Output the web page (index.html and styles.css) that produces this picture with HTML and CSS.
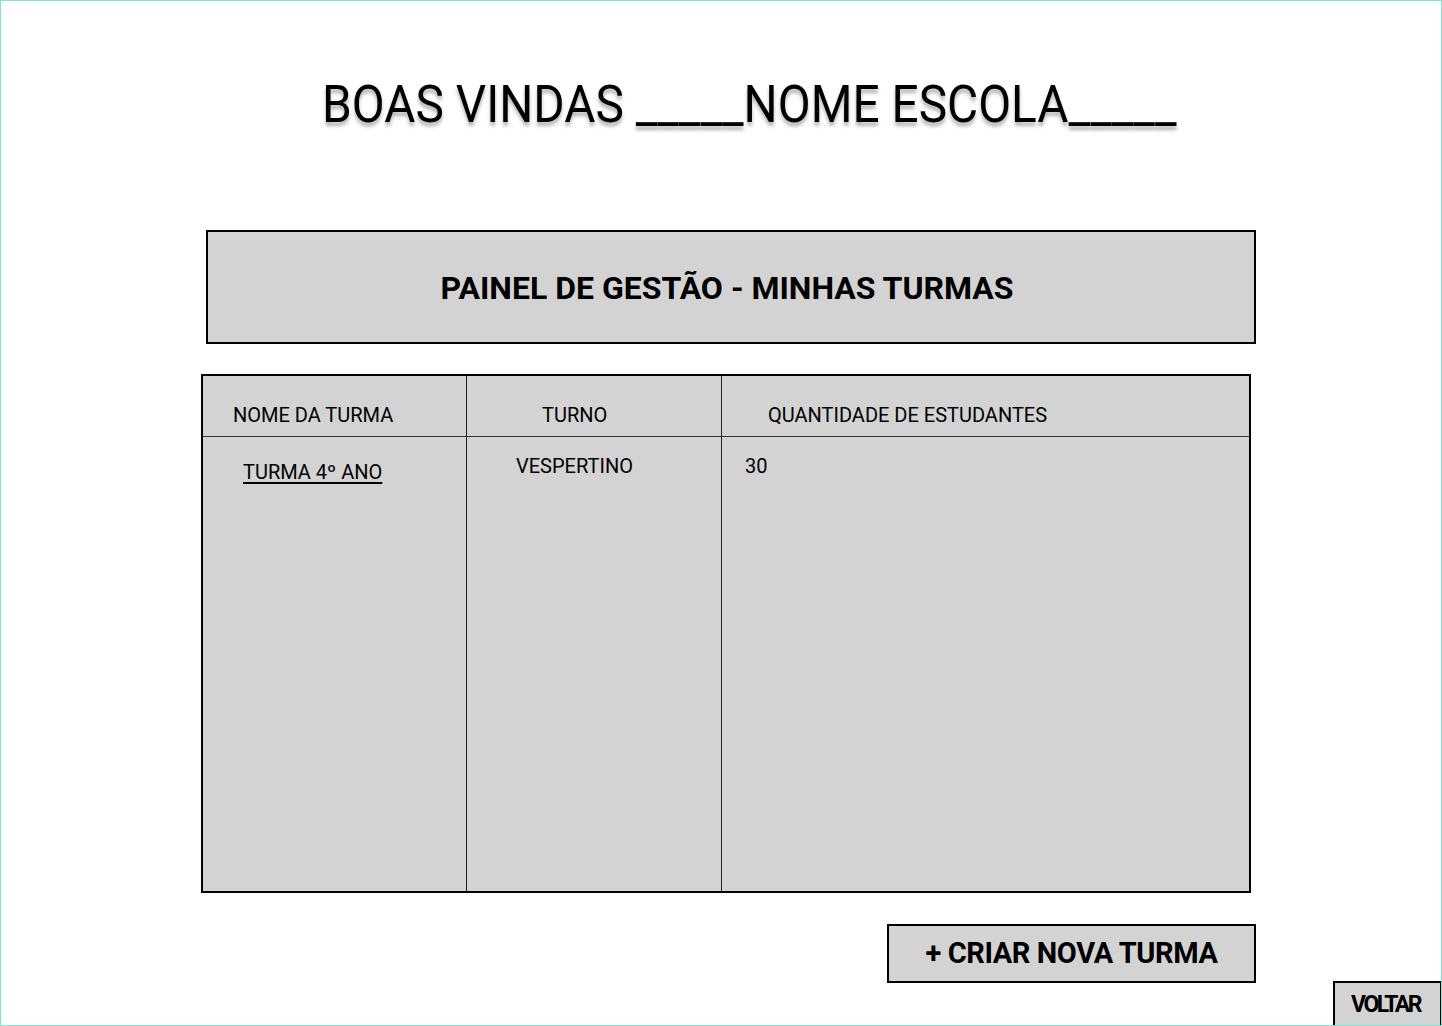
FILE: index.html
```html
<!DOCTYPE html>
<html lang="pt">
<head>
<meta charset="utf-8">
<title>Painel de Gestão</title>
<link rel="stylesheet" href="styles.css">
</head>
<body>
<div class="frame">
  <h1 class="welcome"><span class="welcome-text">BOAS VINDAS _____NOME ESCOLA_____</span></h1>
  <div class="panel">PAINEL DE GESTÃO - MINHAS TURMAS</div>
  <div class="table">
    <div class="col col-name">
      <div class="head">NOME DA TURMA</div>
      <div class="cell"><a class="link" href="#">TURMA 4º ANO</a></div>
    </div>
    <div class="col col-shift">
      <div class="head">TURNO</div>
      <div class="cell">VESPERTINO</div>
    </div>
    <div class="col col-qty">
      <div class="head">QUANTIDADE DE ESTUDANTES</div>
      <div class="cell">30</div>
    </div>
  </div>
  <div class="actions">
    <button class="btn-create">+ CRIAR NOVA TURMA</button>
  </div>
  <div class="footer">
    <button class="btn-back">VOLTAR</button>
  </div>
</div>
</body>
</html>
```
FILE: styles.css
```css
* { box-sizing: border-box; }
html, body { margin: 0; padding: 0; background: #fff; }
body { font-family: Roboto, "Noto Sans", Arial, sans-serif; color: #000; }
.frame {
  width: 1442px;
  height: 1026px;
  border: 1px solid #7fe3d3;
  display: flex;
  flex-direction: column;
  overflow: hidden;
}
.welcome {
  margin: 78px 0 0 0;
  padding-left: 321px;
  height: 52px;
  font-size: 52px;
  line-height: 52px;
  font-weight: 400;
  white-space: nowrap;
}
.welcome-text {
  display: inline-block;
  transform: scaleX(0.92);
  transform-origin: left center;
  text-shadow: 0 4px 4px rgba(0,0,0,0.3);
}
.panel {
  margin: 99px 0 0 205px;
  width: 1050px;
  height: 114px;
  flex-shrink: 0;
  border: 2px solid #000;
  background: #d3d3d3;
  display: flex;
  align-items: center;
  justify-content: center;
  font-size: 32px;
  font-weight: 700;
  padding-right: 8px;
  padding-top: 2px;
}
.table {
  margin: 30px 0 0 200px;
  width: 1050px;
  height: 519px;
  flex-shrink: 0;
  border: 2px solid #000;
  background: #d3d3d3;
  display: flex;
  font-size: 20px;
}
.col { display: flex; flex-direction: column; }
.col-name { width: 264px; border-right: 1px solid #222; }
.col-shift { width: 255px; border-right: 1px solid #222; }
.col-qty { flex: 1; }
.head {
  height: 61px;
  border-bottom: 1px solid #333;
  padding-top: 27px;
  line-height: 24px;
}
.cell { line-height: 24px; }
.col-name .head { padding-left: 30px; }
.col-shift .head { padding-left: 75px; }
.col-qty .head { padding-left: 46px; }
.col-name .cell { padding: 23px 0 0 40px; }
.col-shift .cell { padding: 17px 0 0 49px; }
.col-qty .cell { padding: 17px 0 0 23px; }
.link { color: #000; text-decoration: underline; text-underline-offset: 3px; }
.actions {
  margin-top: 31px;
  display: flex;
  padding-left: 886px;
}
.btn-create {
  width: 369px;
  height: 59px;
  border: 2px solid #000;
  background: #d3d3d3;
  font-family: Roboto, "Noto Sans", Arial, sans-serif;
  font-size: 29px;
  font-weight: 700;
  letter-spacing: -0.4px;
  color: #000;
  padding: 0 0 2px 0;
  cursor: pointer;
}
.footer {
  display: flex;
  justify-content: flex-end;
  margin-top: -2px;
  margin-right: -1px;
}
.btn-back {
  width: 109px;
  height: 46px;
  border: 2px solid #000;
  background: #d3d3d3;
  font-family: Roboto, "Noto Sans", Arial, sans-serif;
  font-size: 23px;
  font-weight: 700;
  letter-spacing: -2.5px;
  color: #000;
  padding: 0 4px 0 0;
  cursor: pointer;
}
```
